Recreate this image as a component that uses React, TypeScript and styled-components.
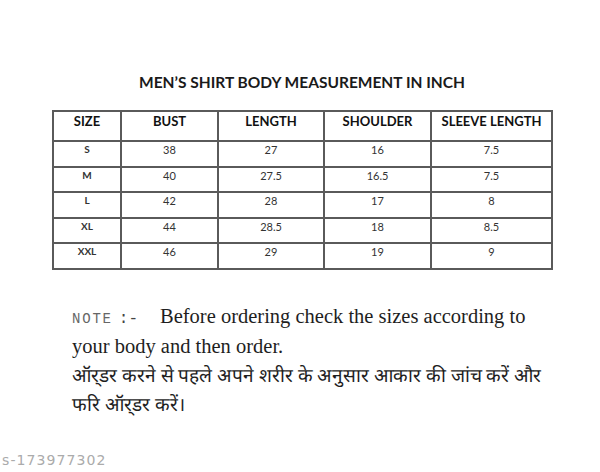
import React from "react";
import styled, { createGlobalStyle } from "styled-components";

const GlobalStyle = createGlobalStyle`
  html, body {
    margin: 0;
    padding: 0;
    background: #ffffff;
  }
  body {
    width: 600px;
    height: 472px;
    overflow: hidden;
  }
`;

const Page = styled.div`
  width: 600px;
  height: 472px;
  display: flex;
  flex-direction: column;
  background: #ffffff;
`;

const Title = styled.h1`
  margin: 72px 0 0 0;
  text-align: center;
  font-family: Lato, "Open Sans", sans-serif;
  font-weight: 700;
  font-size: 15.5px;
  line-height: 21px;
  color: #1a1a1a;
  padding-left: 4px;
`;

const Table = styled.table`
  margin: 17px 0 0 52px;
  width: 499px;
  border-collapse: collapse;
  table-layout: fixed;
  font-family: Lato, "Open Sans", sans-serif;
  color: #222;
`;

const HeadCell = styled.th`
  border: 2px solid #5a5a5a;
  height: 28px;
  padding: 0;
  vertical-align: top;
  text-align: center;
  font-size: 13px;
  font-weight: 700;
  line-height: 18px;
  color: #111;
`;

const Cell = styled.td<{ $bold?: boolean }>`
  border: 2px solid #5a5a5a;
  height: 23.6px;
  padding: 0;
  vertical-align: top;
  text-align: center;
  font-size: ${(p) => (p.$bold ? "10px" : "11px")};
  font-weight: ${(p) => (p.$bold ? 700 : 400)};
  line-height: 15px;
  color: #333;
`;

const Note = styled.div`
  margin: 31px 0 0 72px;
  width: 475px;
  font-family: "Liberation Serif", serif;
  font-size: 20.5px;
  line-height: 30px;
  color: #1e1e1e;
`;

const FirstLine = styled.div`
  display: flex;
  align-items: baseline;
  flex-wrap: wrap;
`;

const NoteLabel = styled.span`
  font-family: "Liberation Mono", monospace;
  font-size: 14px;
  line-height: 1;
  letter-spacing: 1.8px;
  color: #666;
  margin-right: 6px;
`;

const NoteDash = styled.span`
  font-family: "Liberation Mono", monospace;
  font-size: 16px;
  line-height: 1;
  color: #444;
  margin-right: 22px;
`;

const Hindi = styled.div`
  font-family: "Liberation Serif", serif;
  font-size: 19px;
  line-height: 29px;
  width: 475px;
`;

const Code = styled.div`
  margin-top: auto;
  margin-bottom: 4px;
  padding-left: 2px;
  font-family: "DejaVu Sans", sans-serif;
  font-size: 14px;
  letter-spacing: 1.1px;
  color: #ababab;
`;

const columns = [
  { title: "SIZE", width: 68 },
  { title: "BUST", width: 97 },
  { title: "LENGTH", width: 106 },
  { title: "SHOULDER", width: 107 },
  { title: "SLEEVE LENGTH", width: 121 },
];

const rows = [
  ["S", "38", "27", "16", "7.5"],
  ["M", "40", "27.5", "16.5", "7.5"],
  ["L", "42", "28", "17", "8"],
  ["XL", "44", "28.5", "18", "8.5"],
  ["XXL", "46", "29", "19", "9"],
];

export default function App() {
  return (
    <Page>
      <GlobalStyle />
      <Title>MEN’S SHIRT BODY MEASUREMENT IN INCH</Title>
      <Table>
        <colgroup>
          {columns.map((c) => (
            <col key={c.title} style={{ width: c.width }} />
          ))}
        </colgroup>
        <thead>
          <tr>
            {columns.map((c) => (
              <HeadCell key={c.title}>{c.title}</HeadCell>
            ))}
          </tr>
        </thead>
        <tbody>
          {rows.map((r) => (
            <tr key={r[0]}>
              {r.map((v, i) => (
                <Cell key={i} $bold={i === 0}>
                  {v}
                </Cell>
              ))}
            </tr>
          ))}
        </tbody>
      </Table>
      <Note>
        <FirstLine>
          <NoteLabel>NOTE</NoteLabel>
          <NoteDash>:-</NoteDash>
          <span>Before ordering check the sizes according to</span>
        </FirstLine>
        <div>your body and then order.</div>
        <Hindi>ऑर्‌डर करने से पहले अपने शरीर के अनुसार आकार की जांच करें और फरि ऑर्‌डर करें।</Hindi>
      </Note>
      <Code>s-173977302</Code>
    </Page>
  );
}
